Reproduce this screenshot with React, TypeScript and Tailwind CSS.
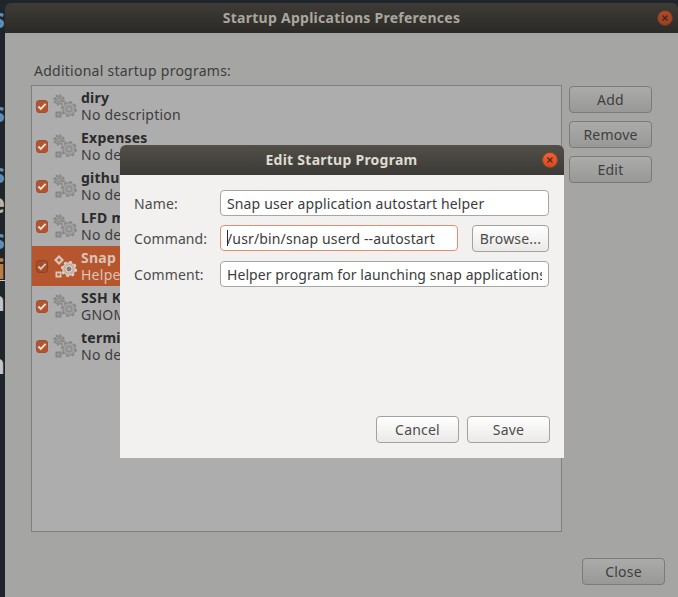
const programs = [
  { name: "diry", comment: "No description" },
  { name: "Expenses", comment: "No description" },
  { name: "github", comment: "No description" },
  { name: "LFD monitor", comment: "No description" },
  { name: "Snap user application autostart helper", comment: "Helper program for launching snap applications", selected: true },
  { name: "SSH Key Agent", comment: "GNOME Keyring: SSH Agent" },
  { name: "terminal", comment: "No description" },
];

const edgeLetters = [
  { top: "top-[3px]", color: "text-[#5b8fc4]", text: "s" },
  { top: "top-[97px]", color: "text-[#5b8fc4]", text: "s" },
  { top: "top-[158px]", color: "text-[#5b8fc4]", text: "s" },
  { top: "top-[188px]", color: "text-[#b9b9b4]", text: "e" },
  { top: "top-[224px]", color: "text-[#5b8fc4]", text: "s" },
  { top: "top-[254px]", color: "text-[#b57f45]", text: "i" },
  { top: "top-[286px]", color: "text-[#b9c8d6]", text: "n" },
  { top: "top-[349px]", color: "text-[#b9c8d6]", text: "n" },
];

function Gear({ cx, cy, r, color, fill, hole }: { cx: number; cy: number; r: number; color: string; fill: string; hole: string }) {
  const teeth = (2 * Math.PI * r) / 16;
  return (
    <g>
      <circle cx={cx} cy={cy} r={r} fill="none" stroke={color} strokeWidth={1.6} strokeDasharray={`${teeth} ${teeth}`} />
      <circle cx={cx} cy={cy} r={r - 1} fill={fill} stroke={color} strokeWidth={1} />
      <circle cx={cx} cy={cy} r={r * 0.42} fill={hole} stroke={color} strokeWidth={1} />
    </g>
  );
}

function GearsIcon({ selected }: { selected?: boolean }) {
  const color = selected ? "#d9c7bc" : "#858583";
  const fill = selected ? "#b5562f" : "#a0a09e";
  return (
    <svg width="24" height="25" viewBox="0 0 24 25" className="shrink-0">
      {selected ? (
        <path d="M6 1 L11 6 L6 11 L1 6 Z M6 4 L4 6 L6 8 L8 6 Z" fill="#d9c7bc" fillRule="evenodd" />
      ) : (
        <Gear cx={6} cy={6} r={5} color={color} fill={fill} hole={fill} />
      )}
      <Gear
        cx={16}
        cy={15}
        r={7.2}
        color={selected ? "#e4dcd6" : color}
        fill={selected ? "#c4b0a5" : fill}
        hole={selected ? "#8f7a6f" : fill}
      />
      <rect x="2.5" y="17.5" width="6" height="6" fill={color} />
      <rect x="4.3" y="19.3" width="2.4" height="2.4" fill={fill} />
    </svg>
  );
}

function Check({ selected }: { selected?: boolean }) {
  return (
    <span
      className={`w-[12px] h-[13px] shrink-0 rounded-[3px] border flex items-center justify-center ${
        selected ? "bg-[#a84d29] border-[#8a4527]" : "bg-[#b5532d] border-[#99563a]"
      }`}
    >
      <svg width="10" height="9" viewBox="0 0 11 9">
        <path d="M1.5 4.5 L4.2 7.2 L9.5 1.6" fill="none" stroke={selected ? "#d9c7bc" : "#e9e2dd"} strokeWidth="2" />
      </svg>
    </span>
  );
}

function CloseDot({ dim }: { dim?: boolean }) {
  return (
    <span
      className={
        dim
          ? "w-[16px] h-[16px] rounded-full bg-gradient-to-b from-[#b4492a] to-[#9a3f22] border border-[#5d3a2a] flex items-center justify-center"
          : "w-[16px] h-[16px] rounded-full bg-gradient-to-b from-[#f0632f] to-[#d9481f] border border-[#8a4a30] flex items-center justify-center"
      }
    >
      <svg width="8" height="8" viewBox="0 0 8 8">
        <path d="M1.5 1.5 L6.5 6.5 M6.5 1.5 L1.5 6.5" stroke={dim ? "#3c2a20" : "#4a2a1c"} strokeWidth="1.3" />
      </svg>
    </span>
  );
}

function DimButton({ label }: { label: string }) {
  return (
    <button className="w-[83px] h-[27px] rounded-[4px] border border-[#7b7b79] bg-gradient-to-b from-[#ababa9] to-[#989896] text-[14px] tracking-[0.2px] text-[#3f3f3f] flex items-center justify-center">
      {label}
    </button>
  );
}

function LightButton({ label, className }: { label: string; className?: string }) {
  return (
    <button
      className={`h-[27px] rounded-[4px] border border-[#a3a19e] bg-gradient-to-b from-[#ffffff] to-[#ebe9e7] text-[14px] tracking-[0.2px] text-[#4c4c4c] flex items-center justify-center ${className ?? ""}`}
    >
      {label}
    </button>
  );
}

function Field({ value, className }: { value: string; className: string }) {
  return (
    <input
      readOnly
      value={value}
      className={`h-[26px] w-full rounded-[4px] border bg-white px-[6px] text-[14px] text-[#3c3c3c] outline-none ${className}`}
    />
  );
}

export default function App() {
  return (
    <div className="relative w-[678px] h-[597px] overflow-hidden flex bg-[#1f262b] font-['Noto_Sans',sans-serif]">
      {/* strip of the desktop behind the window */}
      <div className="relative w-[5px] shrink-0 overflow-hidden">
        {edgeLetters.map((l, i) => (
          <span key={i} className={`absolute right-0 ${l.top} ${l.color} text-[26px] leading-[30px] font-bold`}>
            {l.text}
          </span>
        ))}
        <span className="absolute left-0 top-[280px] h-px w-[5px] bg-[#c9c9c4]" />
      </div>

      <div className="flex-1 flex flex-col pt-[3px]">
        <div className="relative h-[30px] shrink-0 rounded-t-[6px] pb-[2px] bg-gradient-to-b from-[#3f3c37] to-[#2b2a26] flex items-center justify-center">
          <span className="text-[14px] font-bold tracking-[0.26px] text-[#a9a69f]">Startup Applications Preferences</span>
          <span className="absolute right-[5px] top-[7px]">
            <CloseDot dim />
          </span>
        </div>

        <div className="flex-1 bg-[#a5a5a3] pl-[26px] pr-[13px] pt-[28px] pb-[12px] flex flex-col">
          <div className="h-[20px] pl-[3px] text-[14px] leading-[20px] text-[#3d3d3d] tracking-[0.25px]">
            Additional startup programs:
          </div>
          <div className="mt-[4px] h-[447px] flex gap-[7px]">
            <div className="w-[531px] border border-[#808080] bg-[#adadad] overflow-hidden">
              {programs.map((p) => (
                <div
                  key={p.name}
                  className={`h-[40px] flex items-center pl-[4px] ${p.selected ? "bg-[#b5562f]" : ""}`}
                >
                  <Check selected={p.selected} />
                  <span className="ml-[5px] mr-[4px] flex">
                    <GearsIcon selected={p.selected} />
                  </span>
                  <div className="flex flex-col whitespace-nowrap text-[14px] leading-[17px] tracking-[0.25px]">
                    <span className={`font-bold ${p.selected ? "text-[#dcc3b6]" : "text-[#2b2b2b]"}`}>{p.name}</span>
                    <span className={p.selected ? "text-[#dcc3b6]" : "text-[#3d3d3d]"}>{p.comment}</span>
                  </div>
                </div>
              ))}
            </div>
            <div className="flex flex-col gap-[8px] pt-[1px]">
              <DimButton label="Add" />
              <DimButton label="Remove" />
              <DimButton label="Edit" />
            </div>
          </div>
          <div className="mt-auto flex justify-end">
            <DimButton label="Close" />
          </div>
        </div>
      </div>

      {/* modal dialog on top of the dimmed window */}
      <div className="absolute left-[120px] top-[145px] w-[444px] h-[313px] flex flex-col">
        <div className="relative h-[30px] shrink-0 rounded-t-[6px] pb-[2px] bg-gradient-to-b from-[#524f48] to-[#3b3a36] flex items-center justify-center">
          <span className="text-[14px] font-bold tracking-[0.25px] text-[#dfdbd2] mr-[1px]">Edit Startup Program</span>
          <span className="absolute right-[6px] top-[7px]">
            <CloseDot />
          </span>
        </div>
        <div className="flex-1 bg-[#f2f1f0] pl-[14px] pr-[14px] pt-[15px] pb-[15px] flex flex-col">
          <div className="grid grid-cols-[86px_1fr] gap-y-[9px] items-center pr-[1px] text-[14px] tracking-[0.1px] text-[#4c4c4c]">
            <span>Name:</span>
            <Field value="Snap user application autostart helper" className="border-[#a8a6a3] tracking-[0.14px]" />
            <span>Command:</span>
            <div className="flex gap-[14px]">
              <div className="relative w-[238px]">
                <Field value="/usr/bin/snap userd --autostart" className="border-[#e68d70] tracking-[0.14px]" />
                <span className="absolute left-[7px] top-[5px] h-[16px] w-px bg-[#2b2b2b]" />
              </div>
              <LightButton label="Browse..." className="w-[77px] h-[26px]" />
            </div>
            <span>Comment:</span>
            <Field value="Helper program for launching snap applications" className="border-[#a8a6a3] tracking-[0.08px]" />
          </div>
          <div className="mt-auto flex justify-end gap-[8px]">
            <LightButton label="Cancel" className="w-[83px]" />
            <LightButton label="Save" className="w-[83px]" />
          </div>
        </div>
      </div>
    </div>
  );
}
